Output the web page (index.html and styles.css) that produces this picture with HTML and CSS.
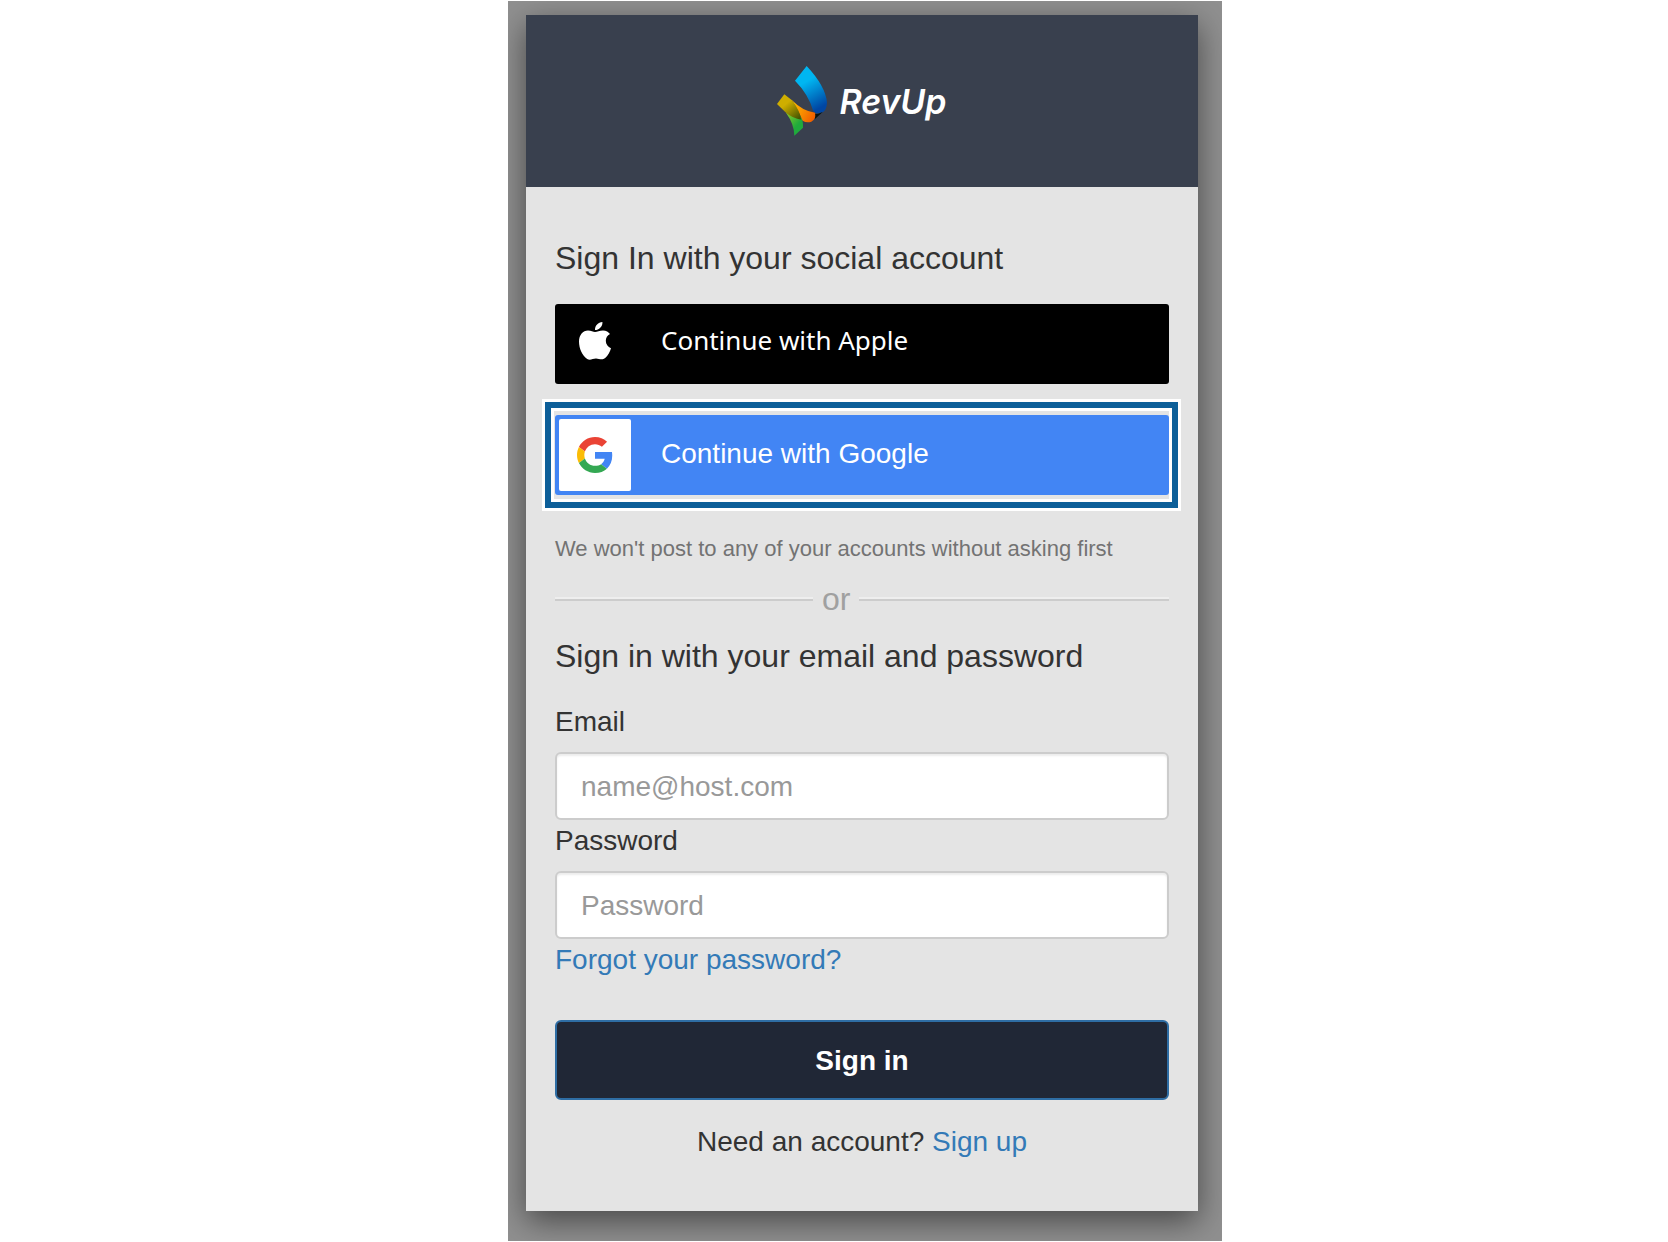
FILE: index.html
```html
<!DOCTYPE html>
<html lang="en">
<head>
  <meta charset="utf-8">
  <meta name="viewport" content="width=device-width, initial-scale=1">
  <title>RevUp - Sign in</title>
  <link rel="stylesheet" href="styles.css">
</head>
<body>
  <div class="backdrop">
    <main class="card">
      <header class="card-header">
        <svg class="logo-mark" viewBox="57 47 150 210" aria-hidden="true">
          <defs>
            <linearGradient id="blue" gradientUnits="userSpaceOnUse" x1="140" y1="85" x2="190" y2="170">
              <stop offset="0.1" stop-color="#00b6f1"/>
              <stop offset="1" stop-color="#0046a3"/>
            </linearGradient>
            <linearGradient id="orange" gradientUnits="userSpaceOnUse" x1="105" y1="170" x2="165" y2="205">
              <stop offset="0" stop-color="#ffb500"/>
              <stop offset="1" stop-color="#f06000"/>
            </linearGradient>
            <linearGradient id="olive" gradientUnits="userSpaceOnUse" x1="85" y1="160" x2="122" y2="205">
              <stop offset="0" stop-color="#cfae00"/>
              <stop offset="1" stop-color="#465400"/>
            </linearGradient>
            <linearGradient id="green" gradientUnits="userSpaceOnUse" x1="90" y1="192" x2="122" y2="220">
              <stop offset="0" stop-color="#7bc62a"/>
              <stop offset="1" stop-color="#1fab3c"/>
            </linearGradient>
          </defs>
          <path fill="url(#blue)" d="M146 47 L111 91 Q152 132 166 183 Q173 194 194 186 Q206 178 207 157 Q203 108 146 47Z"/>
          <path fill="#07130f" d="M168 192 Q180 192 194 185 L171 206Z"/>
          <path fill="url(#green)" d="M84 187 L126 196 Q136 207 135 232 L109 256 Q109 222 84 187Z"/>
          <path fill="url(#orange)" d="M102 150 Q136 184 171 187 Q175 206 160 214 Q146 219 134 211 Q128 196 102 150Z"/>
          <path fill="url(#olive)" d="M79 132 L57 161 L84 187 Q104 204 130 208 Q124 178 102 150Z"/>
        </svg>
        <span class="logo-text">RevUp</span>
      </header>

      <div class="card-body">
        <section>
          <h1 class="heading">Sign In with your social account</h1>
          <button type="button" class="social social-apple">
            <span class="social-icon">
              <svg class="apple-icon" viewBox="0 0 32 38" aria-hidden="true">
                <path fill="#fff" d="M16 10C18.200 10 20.500 8.400 24 8.400C27.200 8.400 29.600 9.900 31 12C28.300 13.700 26.800 15.700 26.800 18.700C26.800 22.100 28.900 24.900 32 26.200C31.200 29.600 28.900 33.500 26.200 36C23.200 38.600 20.200 36.500 17 36.500C13.700 36.500 11.200 38.800 8.200 37C3.200 33.500 0 26.500 0 19.500C0 13 4 8.600 9 8.500C12 8.500 14.300 10 16 10ZM16 8C15.800 3.800 19 0.500 23.400 0C23.800 4.200 20.300 7.900 16 8Z"/>
              </svg>
            </span>
            <span class="social-label">Continue with Apple</span>
          </button>
          <div class="highlight">
            <button type="button" class="social social-google">
              <span class="social-icon">
                <svg class="google-icon" viewBox="0 0 48 48" aria-hidden="true">
                  <path fill="#EA4335" d="M24 9.500c3.540 0 6.710 1.220 9.210 3.600l6.850-6.850C35.900 2.380 30.470 0 24 0 14.620 0 6.510 5.380 2.560 13.220l7.980 6.190C12.430 13.720 17.740 9.500 24 9.500z"/>
                  <path fill="#4285F4" d="M46.980 24.550c0-1.570-.15-3.090-.38-4.550H24v9.020h12.940c-.58 2.960-2.260 5.480-4.780 7.180l7.730 6c4.510-4.180 7.090-10.360 7.090-17.650z"/>
                  <path fill="#FBBC05" d="M10.530 28.590c-.48-1.450-.76-2.990-.76-4.590s.27-3.140.76-4.590l-7.980-6.190C.92 16.460 0 20.120 0 24c0 3.880.92 7.540 2.560 10.780l7.970-6.190z"/>
                  <path fill="#34A853" d="M24 48c6.480 0 11.930-2.130 15.890-5.810l-7.730-6c-2.150 1.450-4.920 2.300-8.160 2.300-6.260 0-11.570-4.220-13.470-9.910l-7.980 6.190C6.510 42.620 14.620 48 24 48z"/>
                </svg>
              </span>
              <span class="social-label">Continue with Google</span>
            </button>
          </div>
          <p class="note">We won't post to any of your accounts without asking first</p>
        </section>

        <div class="divider"><span>or</span></div>

        <form>
          <h2 class="heading">Sign in with your email and password</h2>
          <label class="label" for="email">Email</label>
          <input class="field" id="email" type="email" placeholder="name@host.com">
          <label class="label" for="password">Password</label>
          <input class="field" id="password" type="password" placeholder="Password">
          <a class="forgot" href="#">Forgot your password?</a>
          <button type="submit" class="submit">Sign in</button>
          <p class="signup">Need an account? <a href="#">Sign up</a></p>
        </form>
      </div>
    </main>
  </div>
</body>
</html>
```

FILE: styles.css
```css
*,
*::before,
*::after {
  box-sizing: border-box;
}

body {
  margin: 0;
  padding: 1px 0;
  display: grid;
  grid-template-columns: 508fr minmax(0, 714px) 446fr;
  background: #fff;
  color: #333;
  font-family: "Liberation Sans", Arial, sans-serif;
  font-size: 28px;
  line-height: 42px;
}

h1,
h2,
p {
  margin: 0;
}

a {
  color: #337ab7;
  text-decoration: none;
}

button,
input {
  font: inherit;
}

.backdrop {
  grid-column: 2;
  padding: 14px 24px 30px 18px;
  overflow: hidden;
  background: #909090;
}

.card {
  background: #e4e4e4;
  box-shadow: 0 10px 30px rgba(0, 0, 0, 0.5);
}

.card-header {
  display: flex;
  align-items: center;
  justify-content: center;
  gap: 12px;
  height: 172px;
  background: #39404e;
}

.logo-mark {
  width: 50px;
  height: 70px;
}

.logo-text {
  padding-top: 2px;
  color: #fff;
  font-family: Inter, sans-serif;
  font-size: 34px;
  font-style: italic;
  font-weight: 600;
}

.card-body {
  padding: 53px 29px 48px;
}

.heading {
  font-size: 32px;
  font-weight: 400;
  line-height: 36px;
}

.social {
  display: flex;
  align-items: center;
  gap: 30px;
  width: 100%;
  height: 80px;
  padding: 0 4px;
  border: 0;
  border-radius: 3px;
  color: #fff;
  text-align: left;
  cursor: pointer;
}

.social-apple {
  margin-top: 28px;
  background: #000;
}

.social-google {
  background: #4285f4;
}

.social-icon {
  display: flex;
  align-items: center;
  justify-content: center;
  width: 72px;
  height: 72px;
  border-radius: 2px;
}

.social-google .social-icon {
  background: #fff;
}

.social-label {
  padding-bottom: 2px;
}

.social-apple .social-label {
  padding-bottom: 8px;
  font-family: "Noto Sans", sans-serif;
  font-size: 26px;
}

.apple-icon {
  width: 32px;
  height: 38px;
  margin-bottom: 6px;
}

.google-icon {
  width: 36px;
  height: 36px;
}

.highlight {
  position: relative;
  margin-top: 31px;
}

.highlight::after {
  content: "";
  position: absolute;
  inset: -13px -9px -13px -10px;
  border: 6px solid #0d5f99;
  box-shadow: 0 0 0 3px #fff, inset 0 0 0 3px #fff;
  pointer-events: none;
}

.note {
  margin-top: 38px;
  color: #737373;
  font-size: 22px;
  line-height: 32px;
}

.divider {
  display: flex;
  align-items: center;
  gap: 9px;
  margin: 16px 0 21px;
  color: #a0a0a0;
  font-size: 32px;
  line-height: 36px;
}

.divider::before,
.divider::after {
  content: "";
  flex: 5;
  height: 4px;
  border-top: 2px solid #eee;
  border-bottom: 2px solid #ccc;
}

.divider::after {
  flex: 6;
}

.label {
  display: block;
}

.heading + .label {
  margin-top: 27px;
}

.field {
  display: block;
  width: 100%;
  height: 68px;
  margin-top: 9px;
  padding: 2px 24px 0;
  border: 2px solid #ccc;
  border-radius: 6px;
  background: #fff;
  box-shadow: inset 0 2px 2px rgba(0, 0, 0, 0.08);
  color: #333;
}

.field::placeholder {
  color: #999;
  opacity: 1;
}

.forgot {
  display: block;
}

.submit {
  display: block;
  width: 100%;
  height: 80px;
  margin-top: 39px;
  padding: 2px 0 0;
  border: 2px solid #2e6da4;
  border-radius: 6px;
  background: #202736;
  color: #fff;
  font-weight: 700;
  cursor: pointer;
}

.signup {
  margin-top: 21px;
  text-align: center;
}
```
